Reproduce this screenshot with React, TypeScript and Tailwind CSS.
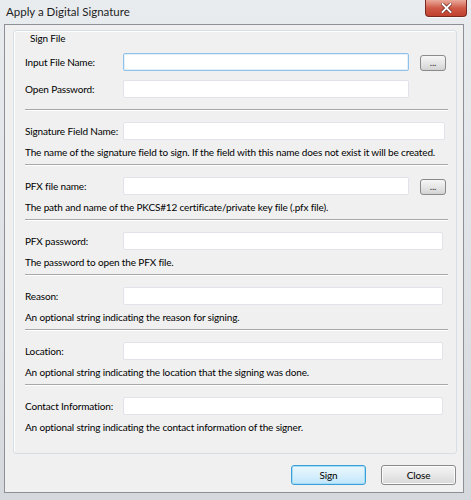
import React from "react";

const font = { fontFamily: 'Lato, "Open Sans", sans-serif' };

function TextBox({ w, focus }: { w: string; focus?: boolean }) {
  return (
    <div
      className={
        "h-[18px] bg-white rounded-[2px] border " +
        w +
        (focus ? " border-[#8fc1ea] shadow-[inset_0_0_0_1px_#e3f0fb]" : " border-[#e2e3ea]")
      }
    />
  );
}

function DotsButton() {
  return (
    <div className="ml-[11px] mt-[2px] w-[26px] h-[16px] rounded-[3px] border border-[#8a8a8a] bg-gradient-to-b from-[#f6f6f6] via-[#e6e6e6] to-[#d3d3d3] flex items-center justify-center text-[10px] leading-none text-[#333] pb-[3px]">
      ...
    </div>
  );
}

function Sep() {
  return (
    <div className="w-[423px]">
      <div className="h-px bg-[#a8a8a8]" />
      <div className="h-px bg-white" />
    </div>
  );
}

function Section({
  label,
  desc,
  inputW,
  dots,
}: {
  label: string;
  desc: string;
  inputW: string;
  dots?: boolean;
}) {
  return (
    <div className="pt-[11px] pb-[4px]">
      <div className="flex items-start h-[18px]">
        <div className="w-[98px] h-[18px] leading-[18px] whitespace-nowrap">{label}</div>
        <TextBox w={inputW} />
        {dots && <DotsButton />}
      </div>
      <div className="mt-[5px] leading-[15px] whitespace-nowrap">{desc}</div>
    </div>
  );
}

export default function App() {
  return (
    <div
      className="w-[471px] h-[500px] relative overflow-hidden bg-gradient-to-b from-[#e9ecef] via-[#dfe3e7] to-[#d5d9de] text-[10px] tracking-[-0.15px] text-[#000]"
      style={font}
    >
      {/* Title bar */}
      <div className="h-[24px] flex items-start relative">
        <div className="pl-[6px] pt-[4px] text-[11.5px] tracking-normal leading-[16px] text-[#1e1e1e]">
          Apply a Digital Signature
        </div>
        <div className="absolute left-[425px] top-0 w-[42px] h-[17px] rounded-b-[4px] border border-t-0 border-[#7a2a22] bg-gradient-to-b from-[#e9a99c] via-[#cf5a47] to-[#c0402f] flex items-center justify-center shadow-[0_1px_0_#ffffffaa]">
          <svg width="11" height="10" viewBox="0 0 11 10">
            <path d="M1.5 1 L9.5 9 M9.5 1 L1.5 9" stroke="#5a1810" strokeWidth="3.2" strokeLinecap="square" />
            <path d="M1.5 1 L9.5 9 M9.5 1 L1.5 9" stroke="#ffffff" strokeWidth="2" strokeLinecap="square" />
          </svg>
        </div>
      </div>

      {/* Client area */}
      <div className="ml-[4px] w-[460px] h-[469px] border border-[#8d9196] bg-[#f0f0f0] relative">
        {/* Group box */}
        <div className="ml-[8px] mt-[5px] w-[444px] h-[424px] rounded-[3px] border border-[#d5dfe5] shadow-[inset_1px_1px_0_#ffffff] pl-[11px]">
          <div className="pl-[5px] leading-[15px] mt-0">Sign File</div>
          <div className="flex items-start mt-[7px] h-[18px]">
            <div className="w-[98px] leading-[18px] whitespace-nowrap">Input File Name:</div>
            <TextBox w="w-[286px]" focus />
            <DotsButton />
          </div>
          <div className="flex items-start mt-[9px] h-[18px]">
            <div className="w-[98px] leading-[18px] whitespace-nowrap">Open Password:</div>
            <TextBox w="w-[286px]" />
          </div>
          <div className="mt-[11px]">
            <Sep />
          </div>
          <Section
            label="Signature Field Name:"
            desc="The name of the signature field to sign. If the field with this name does not exist it will be created."
            inputW="w-[322px]"
          />
          <Sep />
          <Section
            label="PFX file name:"
            desc="The path and name of the PKCS#12 certificate/private key file (.pfx file)."
            inputW="w-[286px]"
            dots
          />
          <Sep />
          <Section label="PFX password:" desc="The password to open the PFX file." inputW="w-[320px]" />
          <Sep />
          <Section
            label="Reason:"
            desc="An optional string indicating the reason for signing."
            inputW="w-[320px]"
          />
          <Sep />
          <Section
            label="Location:"
            desc="An optional string indicating the location that the signing was done."
            inputW="w-[320px]"
          />
          <Sep />
          <Section
            label="Contact Information:"
            desc="An optional string indicating the contact information of the signer."
            inputW="w-[320px]"
          />
        </div>

        {/* Buttons */}
        <div className="flex justify-end pr-[7px] mt-[11px] gap-[15px]">
          <div className="w-[75px] h-[20px] rounded-[3px] border border-[#3c9fd8] shadow-[inset_0_0_0_1px_#a7dcf5] bg-gradient-to-b from-[#eaf6fd] via-[#d9f0fc] to-[#bee6fd] flex items-center justify-center leading-none">
            Sign
          </div>
          <div className="w-[75px] h-[20px] rounded-[3px] border border-[#8a8a8a] shadow-[inset_0_0_0_1px_#fcfcfc] bg-gradient-to-b from-[#f4f4f4] via-[#e8e8e8] to-[#d8d8d8] flex items-center justify-center leading-none">
            Close
          </div>
        </div>
      </div>
    </div>
  );
}
